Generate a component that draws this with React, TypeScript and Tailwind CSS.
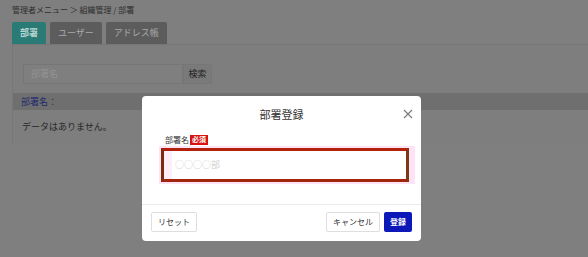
export default function App() {
  const font = { fontFamily: '"Noto Sans CJK JP", "Noto Sans", sans-serif' };
  return (
    <div className="relative w-[588px] h-[257px] overflow-hidden bg-[#7f7f7f]" style={font}>
      {/* page underneath (already dimmed by the backdrop) */}
      <div className="pl-[12px] pt-[4px]">
        <div className="text-[8px] leading-[12px] text-[#2e2e2e]">管理者メニュー ＞ 組織管理 / 部署</div>
        <div className="flex gap-[4px] mt-[6px]">
          <div className="h-[22px] px-[8px] flex items-center rounded-t-[2px] bg-[#2a7b75] text-[9px] text-[#b9d6d3] font-bold">部署</div>
          <div className="h-[22px] px-[8px] flex items-center rounded-t-[2px] bg-[#5c5c5c] text-[9px] text-[#a9a9a9]">ユーザー</div>
          <div className="h-[22px] px-[8px] flex items-center rounded-t-[2px] bg-[#5c5c5c] text-[9px] text-[#a9a9a9]">アドレス帳</div>
        </div>
        <div className="border-t border-l border-[#777] bg-[#7e7e7e] pt-[19px]">
          <div className="flex pl-[10px]">
            <div className="w-[160px] h-[20px] border border-[#767676] bg-[#7f7f7f] text-[9px] text-[#939393] flex items-center pl-[7px]">部署名</div>
            <div className="w-[29px] h-[20px] border border-[#767676] bg-[#7a7a7a] text-[9px] text-[#1f1f1f] flex items-center justify-center">検索</div>
          </div>
          <div className="mt-[9px] h-[17px] bg-[#6f6f6f] flex items-center pl-[8px] text-[9px] text-[#1f2a6e]">部署名：</div>
          <div className="h-[34px] flex items-center pl-[9px] text-[9px] text-[#262626]">データはありません。</div>
        </div>
      </div>

      {/* modal */}
      <div className="absolute left-[142px] top-[96px] w-[279px] h-[145px] bg-white rounded-[4px] flex flex-col">
        <div className="relative h-[36px] flex items-center justify-center">
          <span className="text-[11px] text-[#333] mt-[1px]">部署登録</span>
          <svg className="absolute right-[8px] top-[13px]" width="10" height="10" viewBox="0 0 10 10">
            <path d="M1 1L9 9M9 1L1 9" stroke="#777" strokeWidth="1.1" />
          </svg>
        </div>
        <div className="pl-[17px] pr-[6px] pt-[2px]">
          <div className="flex items-center gap-[1px] h-[11px]">
            <span className="text-[8px] text-[#333] ml-[6px]">部署名</span>
            <span className="h-[10px] px-[2px] bg-[#d9110f] text-white text-[7px] font-bold flex items-center">必須</span>
          </div>
          <div className="mt-[1px] bg-[#fde3f6] p-[2px] pr-[6px]">
            <div className="h-[34px] border-[3px] border-[#b3200c] border-r-[#7d3a12] border-b-[#a3260c] border-l-[#7d2a10] bg-white flex items-center">
              <div className="h-full w-[8px] bg-[#fdeef9]" />
              <span className="ml-[3px] text-[9px] text-[#cfcfcf]">○○○○部</span>
            </div>
          </div>
        </div>
        <div className="mt-[20px] border-t border-[#ececec]" />
        <div className="flex items-center px-[9px] pt-[7px]">
          <div className="h-[20px] px-[6px] border border-[#dedede] rounded-[2px] text-[8px] text-[#333] flex items-center">リセット</div>
          <div className="ml-auto h-[20px] px-[6px] border border-[#dedede] rounded-[2px] text-[8px] text-[#333] flex items-center">キャンセル</div>
          <div className="ml-[4px] h-[20px] px-[6px] bg-[#0d18b8] rounded-[2px] text-[8px] text-white font-bold flex items-center">登録</div>
        </div>
      </div>
    </div>
  );
}
